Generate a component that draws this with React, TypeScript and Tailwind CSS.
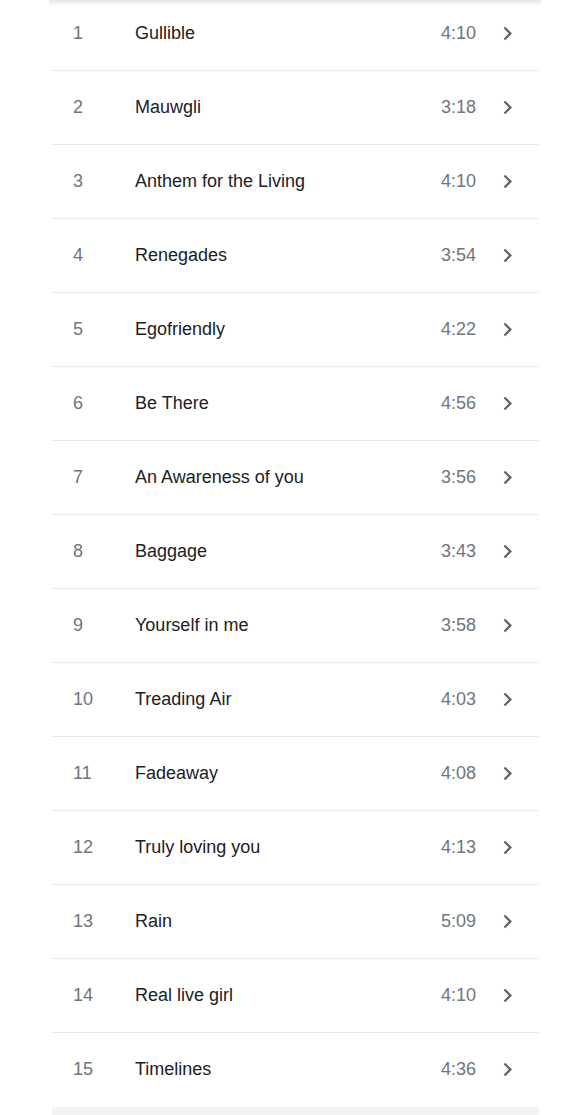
import React from "react";

const tracks: [number, string, string][] = [
  [1, "Gullible", "4:10"],
  [2, "Mauwgli", "3:18"],
  [3, "Anthem for the Living", "4:10"],
  [4, "Renegades", "3:54"],
  [5, "Egofriendly", "4:22"],
  [6, "Be There", "4:56"],
  [7, "An Awareness of you", "3:56"],
  [8, "Baggage", "3:43"],
  [9, "Yourself in me", "3:58"],
  [10, "Treading Air", "4:03"],
  [11, "Fadeaway", "4:08"],
  [12, "Truly loving you", "4:13"],
  [13, "Rain", "5:09"],
  [14, "Real live girl", "4:10"],
  [15, "Timelines", "4:36"],
];

function Chevron() {
  return (
    <svg viewBox="0 0 24 24" className="w-[27px] h-[27px]" fill="#5f6368">
      <path d="M10 6L8.59 7.41 13.17 12l-4.58 4.59L10 18l6-6z" />
    </svg>
  );
}

export default function App() {
  return (
    <div
      className="relative w-[567px] h-[1115px] overflow-hidden bg-white"
      style={{ fontFamily: '"Liberation Sans", Arial, sans-serif' }}
    >
      <div className="absolute left-[49px] top-0 w-[492px] h-[6px] bg-gradient-to-b from-[#e6e6e6] to-white z-10" />
      <div className="ml-[52px] w-[487px] -mt-[3px]">
        {tracks.map(([n, title, dur], i) => (
          <div
            key={n}
            className={`flex items-center h-[74px] pb-[1px] pl-[21px] pr-[18px] ${
              i < tracks.length - 1 ? "border-b border-[#e8eaed]" : ""
            }`}
          >
            <div className="w-[62px] text-[18px] text-[#70757a]">{n}</div>
            <div className="flex-1 text-[18px] text-[#202124]">{title}</div>
            <div className="text-[18px] text-[#70757a] mr-[18px]">{dur}</div>
            <Chevron />
          </div>
        ))}
        <div className="h-[20px] bg-[#f1f3f4]" />
      </div>
    </div>
  );
}
